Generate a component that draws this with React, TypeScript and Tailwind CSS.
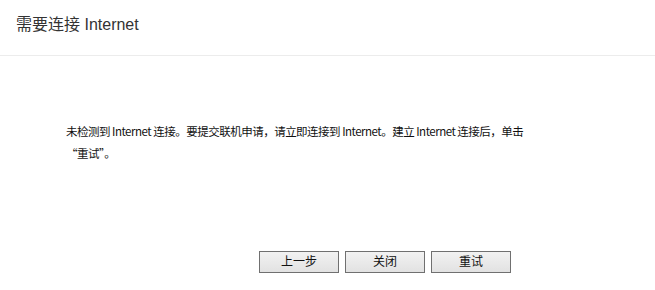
export default function App() {
  const font = { fontFamily: '"Liberation Sans", "Noto Sans CJK SC", sans-serif' };
  const body = { fontFamily: '"Noto Sans CJK SC", "Liberation Sans", sans-serif' };
  return (
    <div className="w-[655px] h-[290px] bg-white flex flex-col" style={font}>
      {/* Header */}
      <div className="h-[56px] border-b border-[#ececec] flex items-center pl-4 pb-[6px]">
        <span className="text-[16px] text-[#333333]">需要连接 Internet</span>
      </div>

      {/* Body */}
      <div className="flex-1 pl-[66px] pt-[64px]">
        <p
          className="w-[480px] text-[11.5px] tracking-[-0.5px] leading-[22px] text-[#111111]"
          style={body}
        >
          未检测到 Internet 连接。要提交联机申请，请立即连接到 Internet。建立 Internet 连接后，单击
          <br />
          “重试”。
        </p>
      </div>

      {/* Buttons */}
      <div className="flex justify-end gap-[6px] pr-[144px] pb-[17px]">
        {["上一步", "关闭", "重试"].map((label) => (
          <button
            key={label}
            className="w-[80px] h-[22px] border border-[#707070] bg-gradient-to-b from-[#f2f2f2] to-[#e2e2e2] text-[12px] text-[#111111] leading-none"
          >
            {label}
          </button>
        ))}
      </div>
    </div>
  );
}
